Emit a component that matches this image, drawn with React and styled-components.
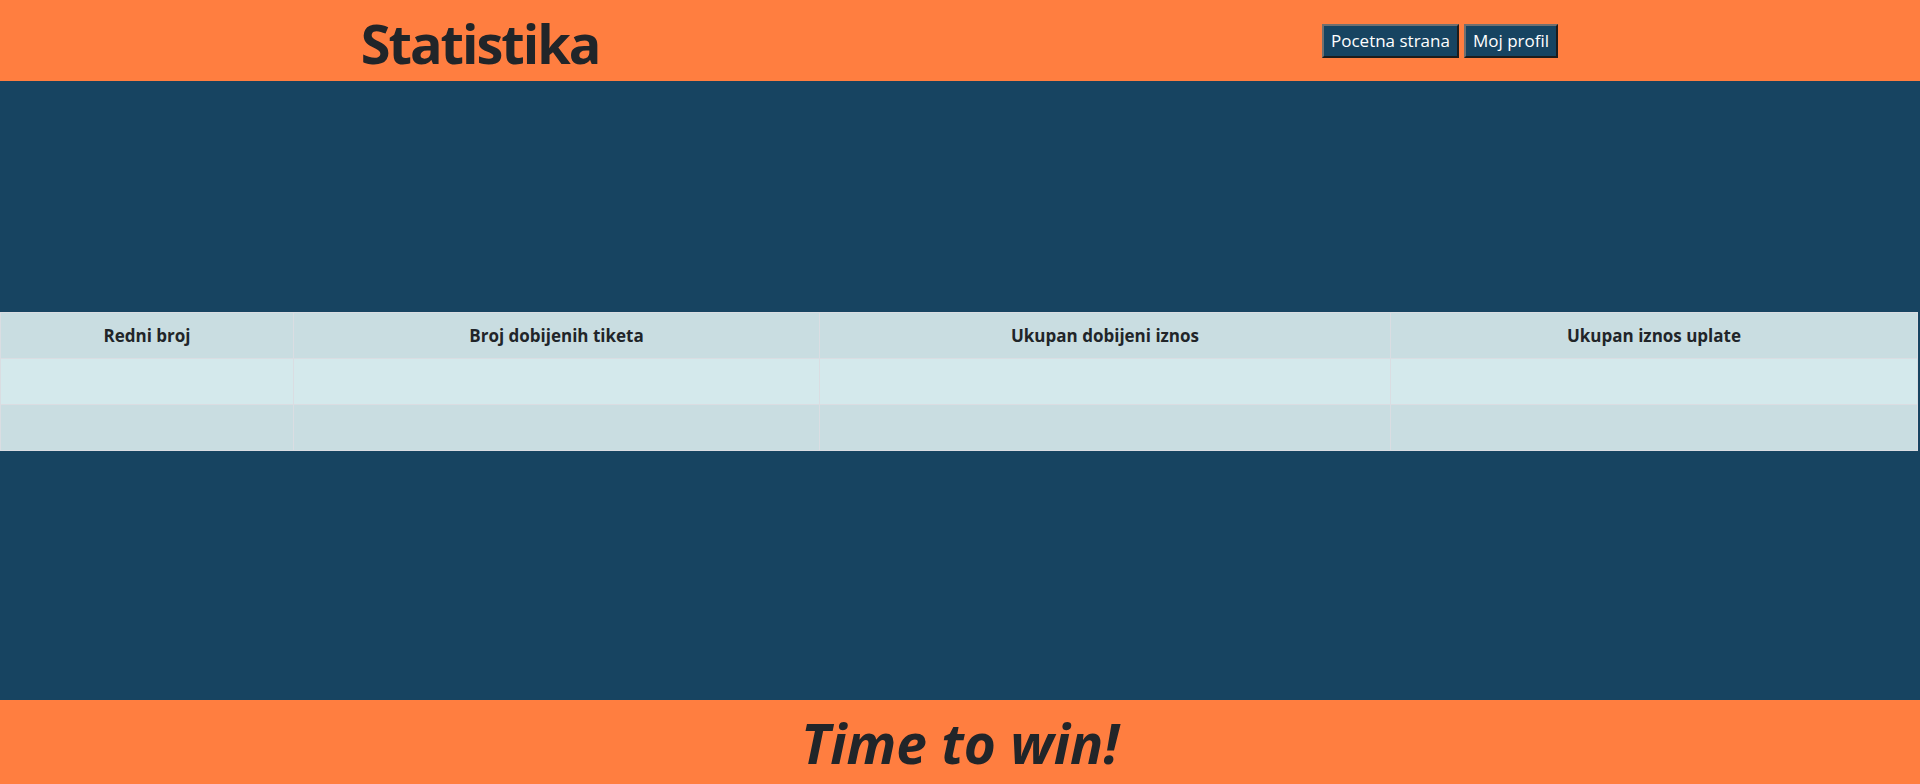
import styled, { createGlobalStyle } from "styled-components";

const GlobalStyle = createGlobalStyle`
  html, body {
    margin: 0;
    padding: 0;
    background: #174461;
    font-family: "Open Sans", "Noto Sans", sans-serif;
    color: #212529;
  }
`;

const columns = [
  { title: "Redni broj", width: 293 },
  { title: "Broj dobijenih tiketa", width: 526 },
  { title: "Ukupan dobijeni iznos", width: 571 },
  { title: "Ukupan iznos uplate", width: 527 },
];

export default function App() {
  const rows = [0, 1];

  return (
    <>
      <GlobalStyle />
      <Page>
        <Header>
          <Half>
            <Title>Statistika</Title>
          </Half>
          <Half>
            <NavButton>Pocetna strana</NavButton>
            <NavButton>Moj profil</NavButton>
          </Half>
        </Header>

        <Main>
          <Table>
            <colgroup>
              {columns.map((c) => (
                <col key={c.title} style={{ width: c.width }} />
              ))}
            </colgroup>
            <thead>
              <tr>
                {columns.map((c) => (
                  <Th key={c.title}>{c.title}</Th>
                ))}
              </tr>
            </thead>
            <tbody>
              {rows.map((r) => (
                <Row key={r} $odd={r % 2 === 0}>
                  {columns.map((c) => (
                    <Td key={c.title} />
                  ))}
                </Row>
              ))}
            </tbody>
          </Table>
        </Main>

        <Footer>
          <Slogan>Time to win!</Slogan>
        </Footer>
      </Page>
    </>
  );
}

const Page = styled.div`
  display: flex;
  flex-direction: column;
  height: 784px;
`;

const Header = styled.header`
  display: flex;
  height: 81px;
  background: #ff7e40;
`;

const Half = styled.div`
  flex: 1;
  display: flex;
  justify-content: center;
  align-items: center;
  gap: 5px;
`;

const Title = styled.h1`
  margin: 4px 0 0;
  font-size: 54px;
  font-weight: 700;
  letter-spacing: -2px;
  line-height: 1;
  color: #212529;
`;

const NavButton = styled.button`
  height: 34px;
  padding: 0 7px;
  font-family: "Open Sans", "Noto Sans", sans-serif;
  font-size: 17px;
  color: #ffffff;
  background: #174461;
  border: 2px solid;
  border-color: #707070 #1c1c1c #1c1c1c #707070;
  cursor: pointer;
`;

const Main = styled.main`
  flex: 1;
  padding: 231px 2px 0 0;
`;

const Table = styled.table`
  width: 100%;
  border-collapse: collapse;
  table-layout: fixed;
`;

const Th = styled.th`
  height: 45px;
  padding: 0;
  font-size: 17px;
  font-weight: 700;
  text-align: center;
  background: #c9dde1;
  border: 1px solid #dadde2;
`;

const Row = styled.tr`
  background: ${(p) => (p.$odd ? "#d4e9ec" : "#c9dde1")};
`;

const Td = styled.td`
  height: 45px;
  padding: 0;
  border: 1px solid #dadde2;
`;

const Footer = styled.footer`
  display: flex;
  justify-content: center;
  align-items: center;
  height: 84px;
  background: #ff7e40;
`;

const Slogan = styled.h2`
  margin: 0;
  font-size: 55px;
  font-weight: 700;
  font-style: italic;
  line-height: 1;
  color: #212529;
`;
